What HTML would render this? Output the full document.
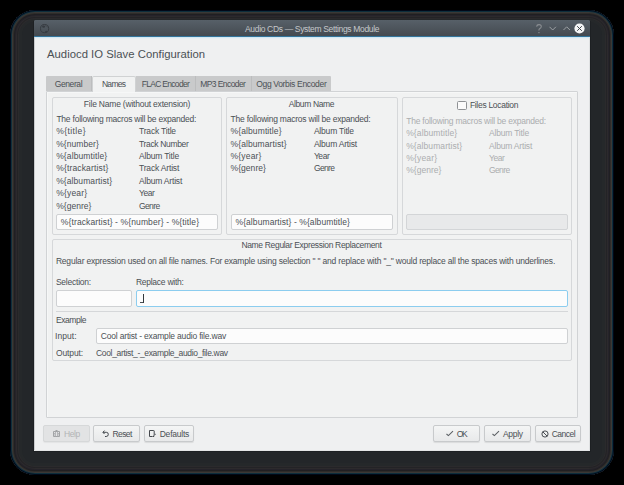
<!DOCTYPE html>
<html><head><meta charset="utf-8">
<style>
html,body{margin:0;padding:0;background:#000;width:624px;height:485px;overflow:hidden}
*{box-sizing:border-box}
.a{position:absolute}
.t{position:absolute;font-family:"Liberation Sans",sans-serif;line-height:12px;white-space:nowrap;color:#4b5055}
.box{position:absolute;border:1px solid #d6d8da;border-radius:2px}
.le{position:absolute;border:1px solid #cfd1d3;border-radius:2px;background:#fcfcfc}
.tab{position:absolute;top:76px;height:15px;background:#c9cacb;border-right:1px solid #bcbdbe}
.btn{position:absolute;top:425px;height:17px;border:1px solid #c8cacc;border-radius:2px;background:linear-gradient(#f4f5f5,#e8e9ea);box-shadow:0 1px 1px rgba(0,0,0,0.09)}
</style></head><body>
<!-- monitor frame -->
<div class="a" style="left:10px;top:10px;width:604px;height:465px;border-radius:25px;background:#232629;box-shadow:inset 0 0 0 1px #000818, inset 0 0 0 2px #0d2e3c, inset 0 0 0 3px #3a3836, inset 0 0 0 4px #2e2c2a, inset 0 0 0 5px #201f22, inset 0 0 0 6px #25232a, inset 0 0 0 7px #2c2a2c, inset 0 0 0 8px #232326, inset 0 0 0 9px #2b2a2c, inset 0 0 0 12px #25282a"></div>
<div class="a" style="left:33px;top:21px;width:1px;height:431px;background:#1d2023"></div>
<div class="a" style="left:33px;top:451px;width:558px;height:1px;background:#1d2023"></div>
<div class="a" style="left:590px;top:21px;width:1px;height:431px;background:#1d2023"></div>
<!-- dialog -->
<div class="a" style="left:34px;top:20px;width:556px;height:431px;background:linear-gradient(#576068 0,#444a50 16px,#eff0f1 16px);border-radius:2px 2px 0 0;overflow:hidden">
 <div class="a" style="left:0;top:0;width:556px;height:16px;background:linear-gradient(#576068,#444a50)"></div>
 <div class="a" style="left:0;top:16px;width:556px;height:1px;background:#33759c"></div>
 <div class="a" style="left:0;top:17px;width:556px;height:1px;background:#d3e8f3"></div><div class="a" style="left:0;top:18px;width:556px;height:1px;background:#e7eff3"></div>
 <div class="a" style="left:0;top:17px;width:1px;height:414px;background:#c9cbcd"></div>
</div>
<div class="a" style="left:34px;top:450px;width:556px;height:1px;background:#e3e5e6"></div>
<div class="a" style="left:589px;top:37px;width:1px;height:414px;background:#dfe1e2"></div>

<!-- titlebar icons -->
<svg class="a" style="left:39px;top:23px" width="11" height="11" viewBox="0 0 11 11"><circle cx="5.6" cy="5.6" r="4.1" fill="none" stroke="#363b41" stroke-width="1"/><ellipse cx="4.6" cy="3.6" rx="1.5" ry="1.2" fill="#363b41"/><ellipse cx="7.2" cy="8.6" rx="1.1" ry="0.9" fill="#363b41"/><path d="M6.5 2.2 Q7.5 3.5 8.8 4" stroke="#3d4248" stroke-width="0.8" fill="none"/></svg>
<svg class="a" style="left:534px;top:23.2px" width="10" height="12" viewBox="0 0 10 12"><path d="M2.6 3.6 Q2.8 1.6 5 1.6 Q7.3 1.6 7.3 3.6 Q7.3 5 5.6 5.8 Q4.9 6.2 4.9 7.6" stroke="#8b8f93" stroke-width="1.05" fill="none"/><rect x="4.4" y="9" width="1.1" height="1.2" fill="#8b8f93"/></svg>
<svg class="a" style="left:548.5px;top:26.3px" width="8" height="6" viewBox="0 0 8 6"><path d="M0.5 0.8 L3.7 4 L6.9 0.8" stroke="#9da1a5" stroke-width="1" fill="none"/></svg>
<svg class="a" style="left:562.5px;top:26.3px" width="8" height="6" viewBox="0 0 8 6"><path d="M0.5 4 L3.7 0.8 L6.9 4" stroke="#9da1a5" stroke-width="1" fill="none"/></svg>
<svg class="a" style="left:574px;top:23px" width="11" height="11" viewBox="0 0 11 11"><circle cx="5.5" cy="5.5" r="5.1" fill="#f5f6f7"/><path d="M3.2 3.2 L7.8 7.8 M7.8 3.2 L3.2 7.8" stroke="#3d4248" stroke-width="1"/></svg>

<!-- tab pane -->
<div class="a" style="left:46px;top:91px;width:532px;height:327px;border:1px solid #d1d3d5;border-radius:1px;background:#f1f2f2;box-shadow:inset 1px 1px 0 #f6f7f7"></div>
<div class="tab" style="left:46px;width:46px;border-radius:1px 0 0 0"></div>
<div class="tab" style="left:136px;width:60px"></div>
<div class="tab" style="left:196px;width:56px"></div>
<div class="tab" style="left:252px;width:79px;border-right:none;border-radius:0 1px 0 0"></div>
<div class="a" style="left:92px;top:76px;width:44px;height:16px;background:#f1f2f2;border:1px solid #d0d2d3;border-bottom:none;border-radius:2px 2px 0 0"></div>

<!-- group boxes -->
<div class="box" style="left:52px;top:97px;width:170px;height:138px"></div>
<div class="box" style="left:226px;top:97px;width:172px;height:138px"></div>
<div class="box" style="left:402px;top:97px;width:170px;height:138px"></div>
<div class="box" style="left:52px;top:239px;width:520px;height:122px"></div>

<!-- line edits -->
<div class="le" style="left:56px;top:214px;width:162px;height:16px"></div>
<div class="le" style="left:231px;top:214px;width:162px;height:16px"></div>
<div class="le" style="left:406px;top:214px;width:162px;height:16px;background:#e8e9ea;border-color:#d3d5d7"></div>
<div style="position:absolute;left:457px;top:101px;width:9.5px;height:9px;border:1px solid #8f9295;border-radius:1.5px;background:#fbfbfb"></div>

<div class="le" style="left:56px;top:290px;width:76px;height:17px"></div>
<div class="le" style="left:136px;top:290px;width:432px;height:17px;border-color:#8ccdef"></div>
<div class="a" style="left:139.5px;top:302px;width:4px;height:1px;background:#4a4f54"></div>
<div class="a" style="left:143px;top:293.5px;width:1px;height:9.5px;background:#33383d"></div>
<div class="a" style="left:56px;top:311px;width:512px;height:1px;background:#d5d7d9"></div>
<div class="le" style="left:96px;top:328px;width:472px;height:16px"></div>

<!-- buttons -->
<div class="btn" style="left:43px;width:46.5px;background:#e2e3e4;border-color:#d6d8d9;box-shadow:0 1px 1px rgba(0,0,0,0.05)"></div>
<div class="btn" style="left:93px;width:47px"></div>
<div class="btn" style="left:144px;width:50px"></div>
<div class="btn" style="left:433px;width:47px"></div>
<div class="btn" style="left:484px;width:47px"></div>
<div class="btn" style="left:535px;width:46px"></div>

<!-- button icons -->
<svg class="a" style="left:53px;top:430px" width="8" height="8" viewBox="0 0 8 8"><path d="M0.5 1.5 H6.5 V6.5 H0.5 Z" fill="none" stroke="#a2a4a6" stroke-width="1"/><path d="M2.5 0.5 H4.5" stroke="#a2a4a6" stroke-width="1"/><path d="M2.5 1.5 V6.5 M4.5 1.5 V6.5 M1 3.5 H2 M5 3.5 H6 M1 5 H2 M5 5 H6" stroke="#a9abad" stroke-width="0.8"/></svg>
<svg class="a" style="left:102px;top:430px" width="8" height="8" viewBox="0 0 8 8"><path d="M1 2.3 H4.3 Q6.3 2.3 6.3 4.3 Q6.3 6.5 4.2 6.5 H3" fill="none" stroke="#43484d" stroke-width="1"/><path d="M2.5 0.6 L0.9 2.3 L2.5 4" fill="none" stroke="#43484d" stroke-width="1"/></svg>
<svg class="a" style="left:149px;top:430px" width="8" height="8" viewBox="0 0 8 8"><path d="M0.5 6.5 V0.5 H4.7 Q5.2 0.5 5.2 1 V5.2 M0.5 6.5 H3" fill="none" stroke="#45494e" stroke-width="1"/><path d="M2.8 7 L5.4 4.8 L5.4 6.2 L4.6 7 Z" fill="#33373b"/><path d="M5.8 3.5 L7.2 4.3 L5.8 5.1 Z" fill="#55595d"/></svg>
<svg class="a" style="left:446px;top:430px" width="8" height="7" viewBox="0 0 8 7"><path d="M0.5 4 L2.4 5.6 L7 1.2" fill="none" stroke="#5a5e63" stroke-width="1.05"/></svg>
<svg class="a" style="left:492px;top:430px" width="8" height="7" viewBox="0 0 8 7"><path d="M0.5 4 L2.4 5.6 L7 1.2" fill="none" stroke="#5a5e63" stroke-width="1.05"/></svg>
<svg class="a" style="left:540.5px;top:429.5px" width="8" height="9" viewBox="0 0 8 9"><circle cx="4" cy="4" r="3.1" fill="none" stroke="#4a4e53" stroke-width="1"/><path d="M1.9 1.9 L6.1 6.1" stroke="#4a4e53" stroke-width="1"/></svg>
<div class="t" style="left:245.0px;top:23px;font-size:8.5px;letter-spacing:-0.333px;color:#c5c8cb;">Audio CDs — System Settings Module</div>
<div class="t" style="left:47.0px;top:48px;font-size:11.3px;letter-spacing:0.017px;">Audiocd IO Slave Configuration</div>
<div class="t" style="left:54.7px;top:78px;font-size:8.5px;letter-spacing:-0.400px;">General</div>
<div class="t" style="left:101.9px;top:78px;font-size:8.5px;letter-spacing:-0.675px;">Names</div>
<div class="t" style="left:141.8px;top:78px;font-size:8.5px;letter-spacing:-0.709px;">FLAC Encoder</div>
<div class="t" style="left:200.3px;top:78px;font-size:8.5px;letter-spacing:-0.590px;">MP3 Encoder</div>
<div class="t" style="left:256.2px;top:78px;font-size:8.5px;letter-spacing:-0.324px;">Ogg Vorbis Encoder</div>
<div class="t" style="left:83.8px;top:98px;font-size:8.5px;letter-spacing:-0.207px;">File Name (without extension)</div>
<div class="t" style="left:56.4px;top:113px;font-size:8.5px;letter-spacing:-0.227px;">The following macros will be expanded:</div>
<div class="t" style="left:56.2px;top:125px;font-size:8.5px;letter-spacing:0.414px;">%{title}</div>
<div class="t" style="left:139.0px;top:125px;font-size:8.5px;letter-spacing:-0.180px;">Track Title</div>
<div class="t" style="left:56.2px;top:138px;font-size:8.5px;letter-spacing:0.075px;">%{number}</div>
<div class="t" style="left:139.0px;top:138px;font-size:8.5px;letter-spacing:-0.336px;">Track Number</div>
<div class="t" style="left:56.2px;top:150px;font-size:8.5px;letter-spacing:0.108px;">%{albumtitle}</div>
<div class="t" style="left:139.0px;top:150px;font-size:8.5px;letter-spacing:-0.190px;">Album Title</div>
<div class="t" style="left:56.2px;top:162px;font-size:8.5px;letter-spacing:0.154px;">%{trackartist}</div>
<div class="t" style="left:139.0px;top:162px;font-size:8.5px;letter-spacing:-0.173px;">Track Artist</div>
<div class="t" style="left:56.2px;top:175px;font-size:8.5px;letter-spacing:0.085px;">%{albumartist}</div>
<div class="t" style="left:139.0px;top:175px;font-size:8.5px;letter-spacing:-0.191px;">Album Artist</div>
<div class="t" style="left:56.2px;top:187px;font-size:8.5px;letter-spacing:0.183px;">%{year}</div>
<div class="t" style="left:139.0px;top:187px;font-size:8.5px;letter-spacing:-0.433px;">Year</div>
<div class="t" style="left:56.2px;top:200px;font-size:8.5px;letter-spacing:0.043px;">%{genre}</div>
<div class="t" style="left:139.0px;top:200px;font-size:8.5px;letter-spacing:-0.625px;">Genre</div>
<div class="t" style="left:60.8px;top:216px;font-size:8.5px;letter-spacing:0.125px;">%{trackartist} - %{number} - %{title}</div>
<div class="t" style="left:288.7px;top:98px;font-size:8.5px;letter-spacing:-0.367px;">Album Name</div>
<div class="t" style="left:230.6px;top:113px;font-size:8.5px;letter-spacing:-0.227px;">The following macros will be expanded:</div>
<div class="t" style="left:230.6px;top:125px;font-size:8.5px;letter-spacing:0.108px;">%{albumtitle}</div>
<div class="t" style="left:313.9px;top:125px;font-size:8.5px;letter-spacing:-0.190px;">Album Title</div>
<div class="t" style="left:230.6px;top:138px;font-size:8.5px;letter-spacing:0.085px;">%{albumartist}</div>
<div class="t" style="left:313.9px;top:138px;font-size:8.5px;letter-spacing:-0.191px;">Album Artist</div>
<div class="t" style="left:230.6px;top:150px;font-size:8.5px;letter-spacing:0.183px;">%{year}</div>
<div class="t" style="left:313.9px;top:150px;font-size:8.5px;letter-spacing:-0.433px;">Year</div>
<div class="t" style="left:230.6px;top:162px;font-size:8.5px;letter-spacing:0.043px;">%{genre}</div>
<div class="t" style="left:313.9px;top:162px;font-size:8.5px;letter-spacing:-0.625px;">Genre</div>
<div class="t" style="left:235.5px;top:216px;font-size:8.5px;letter-spacing:0.083px;">%{albumartist} - %{albumtitle}</div>
<div class="t" style="left:469.9px;top:99px;font-size:8.5px;letter-spacing:-0.300px;">Files Location</div>
<div class="t" style="left:406.2px;top:115px;font-size:8.5px;letter-spacing:-0.227px;color:#abadaf;">The following macros will be expanded:</div>
<div class="t" style="left:406.2px;top:127px;font-size:8.5px;letter-spacing:0.108px;color:#abadaf;">%{albumtitle}</div>
<div class="t" style="left:489.0px;top:127px;font-size:8.5px;letter-spacing:-0.190px;color:#abadaf;">Album Title</div>
<div class="t" style="left:406.2px;top:140px;font-size:8.5px;letter-spacing:0.085px;color:#abadaf;">%{albumartist}</div>
<div class="t" style="left:489.0px;top:140px;font-size:8.5px;letter-spacing:-0.191px;color:#abadaf;">Album Artist</div>
<div class="t" style="left:406.2px;top:152px;font-size:8.5px;letter-spacing:0.183px;color:#abadaf;">%{year}</div>
<div class="t" style="left:489.0px;top:152px;font-size:8.5px;letter-spacing:-0.433px;color:#abadaf;">Year</div>
<div class="t" style="left:406.2px;top:164px;font-size:8.5px;letter-spacing:0.043px;color:#abadaf;">%{genre}</div>
<div class="t" style="left:489.0px;top:164px;font-size:8.5px;letter-spacing:-0.625px;color:#abadaf;">Genre</div>
<div class="t" style="left:241.4px;top:239px;font-size:8.5px;letter-spacing:-0.329px;">Name Regular Expression Replacement</div>
<div class="t" style="left:55.9px;top:255px;font-size:8.5px;letter-spacing:-0.198px;">Regular expression used on all file names. For example using selection " " and replace with "_" would replace all the spaces with underlines.</div>
<div class="t" style="left:55.9px;top:276px;font-size:8.5px;letter-spacing:-0.222px;">Selection:</div>
<div class="t" style="left:135.9px;top:276px;font-size:8.5px;letter-spacing:-0.250px;">Replace with:</div>
<div class="t" style="left:56.0px;top:314px;font-size:8.5px;letter-spacing:-0.450px;">Example</div>
<div class="t" style="left:55.0px;top:330px;font-size:8.5px;letter-spacing:0.080px;">Input:</div>
<div class="t" style="left:100.8px;top:330px;font-size:8.5px;letter-spacing:-0.183px;">Cool artist - example audio file.wav</div>
<div class="t" style="left:56.0px;top:347px;font-size:8.5px;letter-spacing:-0.117px;">Output:</div>
<div class="t" style="left:96.0px;top:347px;font-size:8.5px;letter-spacing:-0.331px;">Cool_artist_-_example_audio_file.wav</div>
<div class="t" style="left:64.0px;top:428px;font-size:8.5px;letter-spacing:-0.433px;color:#b2b4b6;">Help</div>
<div class="t" style="left:112.4px;top:428px;font-size:8.5px;letter-spacing:-0.550px;">Reset</div>
<div class="t" style="left:159.7px;top:428px;font-size:8.5px;letter-spacing:-0.214px;">Defaults</div>
<div class="t" style="left:456.8px;top:428px;font-size:8.5px;letter-spacing:-1.400px;">OK</div>
<div class="t" style="left:503.0px;top:428px;font-size:8.5px;letter-spacing:-0.325px;">Apply</div>
<div class="t" style="left:551.7px;top:428px;font-size:8.5px;letter-spacing:-0.480px;">Cancel</div>
</body></html>
